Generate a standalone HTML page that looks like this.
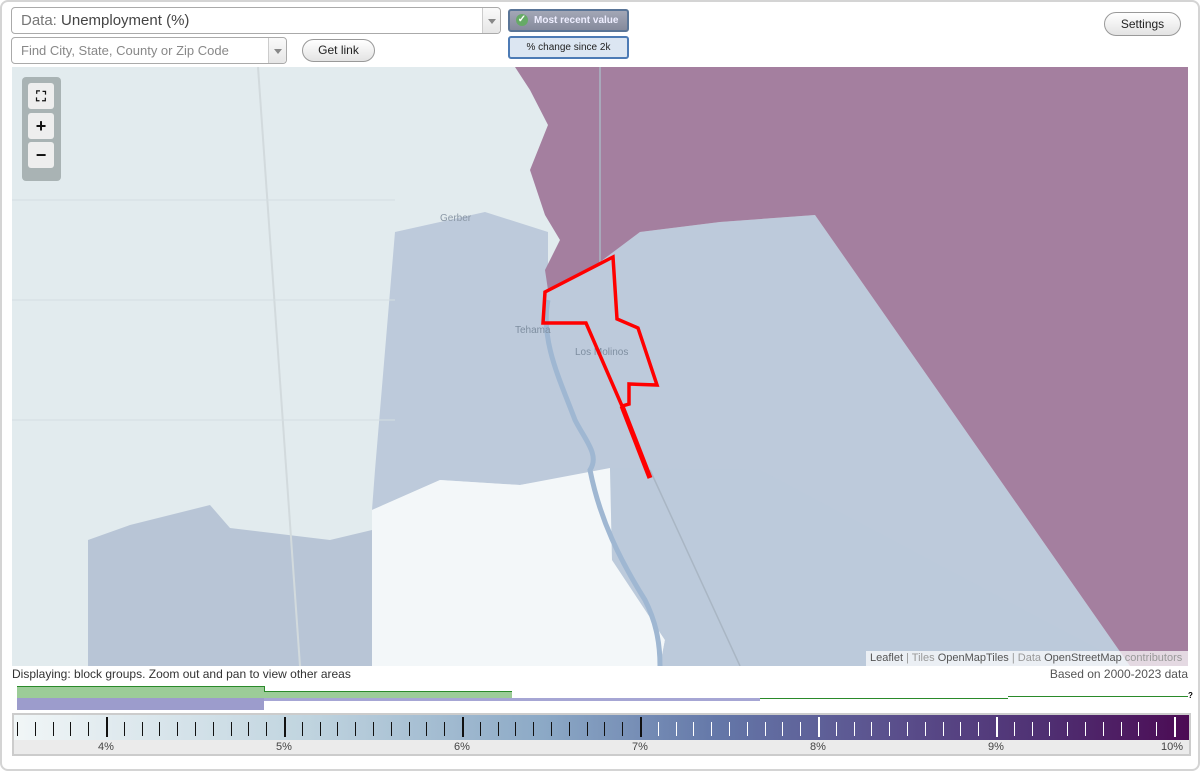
<!DOCTYPE html>
<html><head><meta charset="utf-8"><style>
*{box-sizing:border-box;margin:0;padding:0}
body{width:1200px;height:771px;background:#fff;font-family:"Liberation Sans",Arial,sans-serif;position:relative;overflow:hidden}
.frame{position:absolute;left:0;top:0;width:1200px;height:771px;border:2px solid #d4d4d4;border-radius:8px}
.sel{position:absolute;background:#fff;border:1px solid #aaa;border-radius:4px;color:#444}
.arrow{position:absolute;right:0;top:0;bottom:0;width:18px;border-left:1px solid #ccc;background:linear-gradient(#fafafa,#e6e6e6);border-radius:0 4px 4px 0}
.arrow:after{content:"";position:absolute;left:5px;top:50%;margin-top:-2px;border:4px solid transparent;border-top:5px solid #888}
.btn{position:absolute;border:1px solid #999;border-radius:12px;background:linear-gradient(#fff,#e3e3e3);font-size:12px;text-align:center;color:#222}
.map{position:absolute;left:12px;top:67px;width:1176px;height:599px;overflow:hidden}
.ctl{position:absolute;left:22px;top:77px;width:39px;height:104px;background:rgba(150,160,160,.75);border-radius:4px}
.ctl div{position:absolute;left:6px;width:26px;height:26px;background:#eee;border-radius:3px;font-weight:bold;text-align:center;line-height:26px;font-size:18px;color:#111}
.tick{position:absolute;top:720px;width:1px;height:16px;background:#111}
.lbl{position:absolute;top:741px;font-size:11px;color:#444;width:30px;margin-left:-15px;text-align:center}
</style></head><body>
<div class="frame"></div>
<div class="sel" style="left:11px;top:7px;width:490px;height:27px;font-size:15px;line-height:25px;padding-left:9px"><span style="color:#777">Data:</span> Unemployment (%)<div class="arrow"></div></div>
<div class="sel" style="left:11px;top:37px;width:276px;height:27px;font-size:13px;line-height:25px;padding-left:9px;color:#888">Find City, State, County or Zip Code<div class="arrow"></div></div>
<div class="btn" style="left:302px;top:39px;width:73px;height:23px;line-height:21px">Get link</div>
<div style="position:absolute;left:508px;top:9px;width:121px;height:23px;border:2px solid #5a7597;border-radius:3px;background:linear-gradient(#a3a7b6,#858a9c);color:#eef;font-size:10px;font-weight:bold;line-height:19px;padding-left:24px">Most recent value<span style="position:absolute;left:6px;top:3px;width:12px;height:12px;border-radius:6px;background:#6a6;color:#fff;font-size:10px;line-height:12px;text-align:center">✓</span></div>
<div style="position:absolute;left:508px;top:36px;width:121px;height:23px;border:2px solid #4d7bb5;border-radius:3px;background:#dce6f2;color:#222;font-size:10px;line-height:19px;text-align:center">% change since 2k</div>
<div class="btn" style="left:1104px;top:12px;width:77px;height:24px;line-height:22px">Settings</div>

<div class="map">
<svg width="1176" height="599" viewBox="12 67 1176 599">
<rect x="12" y="67" width="1176" height="599" fill="#e2ebee"/>
<path d="M395,232 L440,222 L485,212 L548,232 L548,290 L600,262 L640,232 L720,222 L815,215 L1130,666 L660,666 L610,470 L520,485 L440,480 L372,510 L375,470 Z" fill="#bdcadb"/>
<path d="M88,540 L130,525 L210,505 L230,528 L330,540 L372,530 L372,666 L88,666 Z" fill="#b8c5d6"/>
<path d="M372,510 L440,480 L520,485 L610,468 L612,560 L665,640 L660,666 L372,666 Z" fill="#f3f7f9"/>
<path d="M610,468 L612,560 L665,640 L660,666 L1130,666 L760,470 Z" fill="#bccadb"/>
<path d="M515,67 L1188,67 L1188,666 L1130,666 L815,215 L720,222 L640,232 L600,262 L548,290 L545,270 L560,240 L545,215 L530,170 L548,125 L530,90 Z" fill="#a47f9f"/>
<path d="M548,300 C540,340 560,380 575,420 C585,440 600,455 590,470 C600,520 620,560 645,600 C655,620 660,640 660,666" stroke="#9fb7d2" stroke-width="5" fill="none"/>
<path d="M600,67 L600,262 M650,470 L740,666" stroke="#a9b6c4" stroke-width="1.5" fill="none"/>
<path d="M258,67 L300,666" stroke="#d2dadd" stroke-width="2" fill="none"/>
<path d="M12,300 L395,300 M12,420 L395,420 M12,200 L395,200" stroke="#d4dde1" stroke-width="1" fill="none"/>
<text x="440" y="221" font-size="10" fill="#8a97a5">Gerber</text>
<text x="515" y="333" font-size="10" fill="#7e8ea0">Tehama</text>
<text x="575" y="355" font-size="10" fill="#7e8ea0">Los Molinos</text>
<path d="M545,292 L613,257 L617,319 L638,328 L657,385 L629,384 L629,404 L622,406 L586,323 L543,323 Z" stroke="#f00" stroke-width="3.5" fill="none" stroke-linejoin="miter"/>
<path d="M622,406 L650,478" stroke="#f00" stroke-width="5"/>
</svg>
<div style="position:absolute;right:0;bottom:0;width:322px;height:15px;background:rgba(255,255,255,.7);font-size:11px;color:#999;line-height:15px;padding-left:4px"><span style="color:#555">Leaflet</span> | Tiles <span style="color:#555">OpenMapTiles</span> | Data <span style="color:#555">OpenStreetMap</span> contributors</div>
</div>
<div class="ctl"><div style="top:6px;font-size:14px">⛶</div><div style="top:36px">+</div><div style="top:65px">−</div></div>

<div style="position:absolute;left:12px;top:667px;font-size:12px;color:#333">Displaying: block groups. Zoom out and pan to view other areas</div>
<div style="position:absolute;right:12px;top:667px;font-size:12px;color:#555">Based on 2000-2023 data</div>

<div style="position:absolute;left:17px;top:686px;width:247px;height:12px;background:#9ccc98"></div>
<div style="position:absolute;left:264px;top:691px;width:248px;height:7px;background:#9ccc98;border-top:1px solid #2a8a2a"></div>
<div style="position:absolute;left:17px;top:686px;width:247px;height:1px;background:#2a8a2a"></div>
<div style="position:absolute;left:264px;top:686px;width:1px;height:6px;background:#2a8a2a"></div>
<div style="position:absolute;left:512px;top:698px;width:496px;height:1px;background:#2a8a2a"></div>
<div style="position:absolute;left:1008px;top:696px;width:180px;height:1px;background:#2a8a2a"></div>
<div style="position:absolute;left:17px;top:698px;width:247px;height:12px;background:#9c9ccc"></div>
<div style="position:absolute;left:264px;top:698px;width:496px;height:3px;background:#a6a6d4"></div>
<div style="position:absolute;left:1188px;top:691px;font-size:8px;font-weight:bold">?</div>

<div style="position:absolute;left:12px;top:713px;width:1179px;height:43px;border:2px solid #ccc;background:#ebebeb"></div>
<div style="position:absolute;left:14px;top:715px;width:1175px;height:25px;background:linear-gradient(90deg,#f1f6f7 0%,#c0d4df 25%,#8ca9c6 45%,#6477a8 60%,#5a4f8c 75%,#4f2f72 88%,#4c0b54 100%)"></div>
<div id="t"></div>
<div class="lbl" style="left:106px">4%</div><div class="lbl" style="left:284px">5%</div><div class="lbl" style="left:462px">6%</div><div class="lbl" style="left:640px">7%</div><div class="lbl" style="left:818px">8%</div><div class="lbl" style="left:996px">9%</div><div class="lbl" style="left:1172px">10%</div>
<script>
var h='';for(var i=0;i<=65;i++){var x=17+i*17.8;if(x>1180)break;var maj=(i-5)%10==0;var c=x>650?'#fff':'#111';h+='<div class="tick" style="left:'+x.toFixed(1)+'px;width:'+(maj?2:1)+'px;background:'+c+';top:'+(maj?717:722)+'px;height:'+(maj?20:14)+'px"></div>';}
document.getElementById('t').innerHTML=h;
</script>
</body></html>
